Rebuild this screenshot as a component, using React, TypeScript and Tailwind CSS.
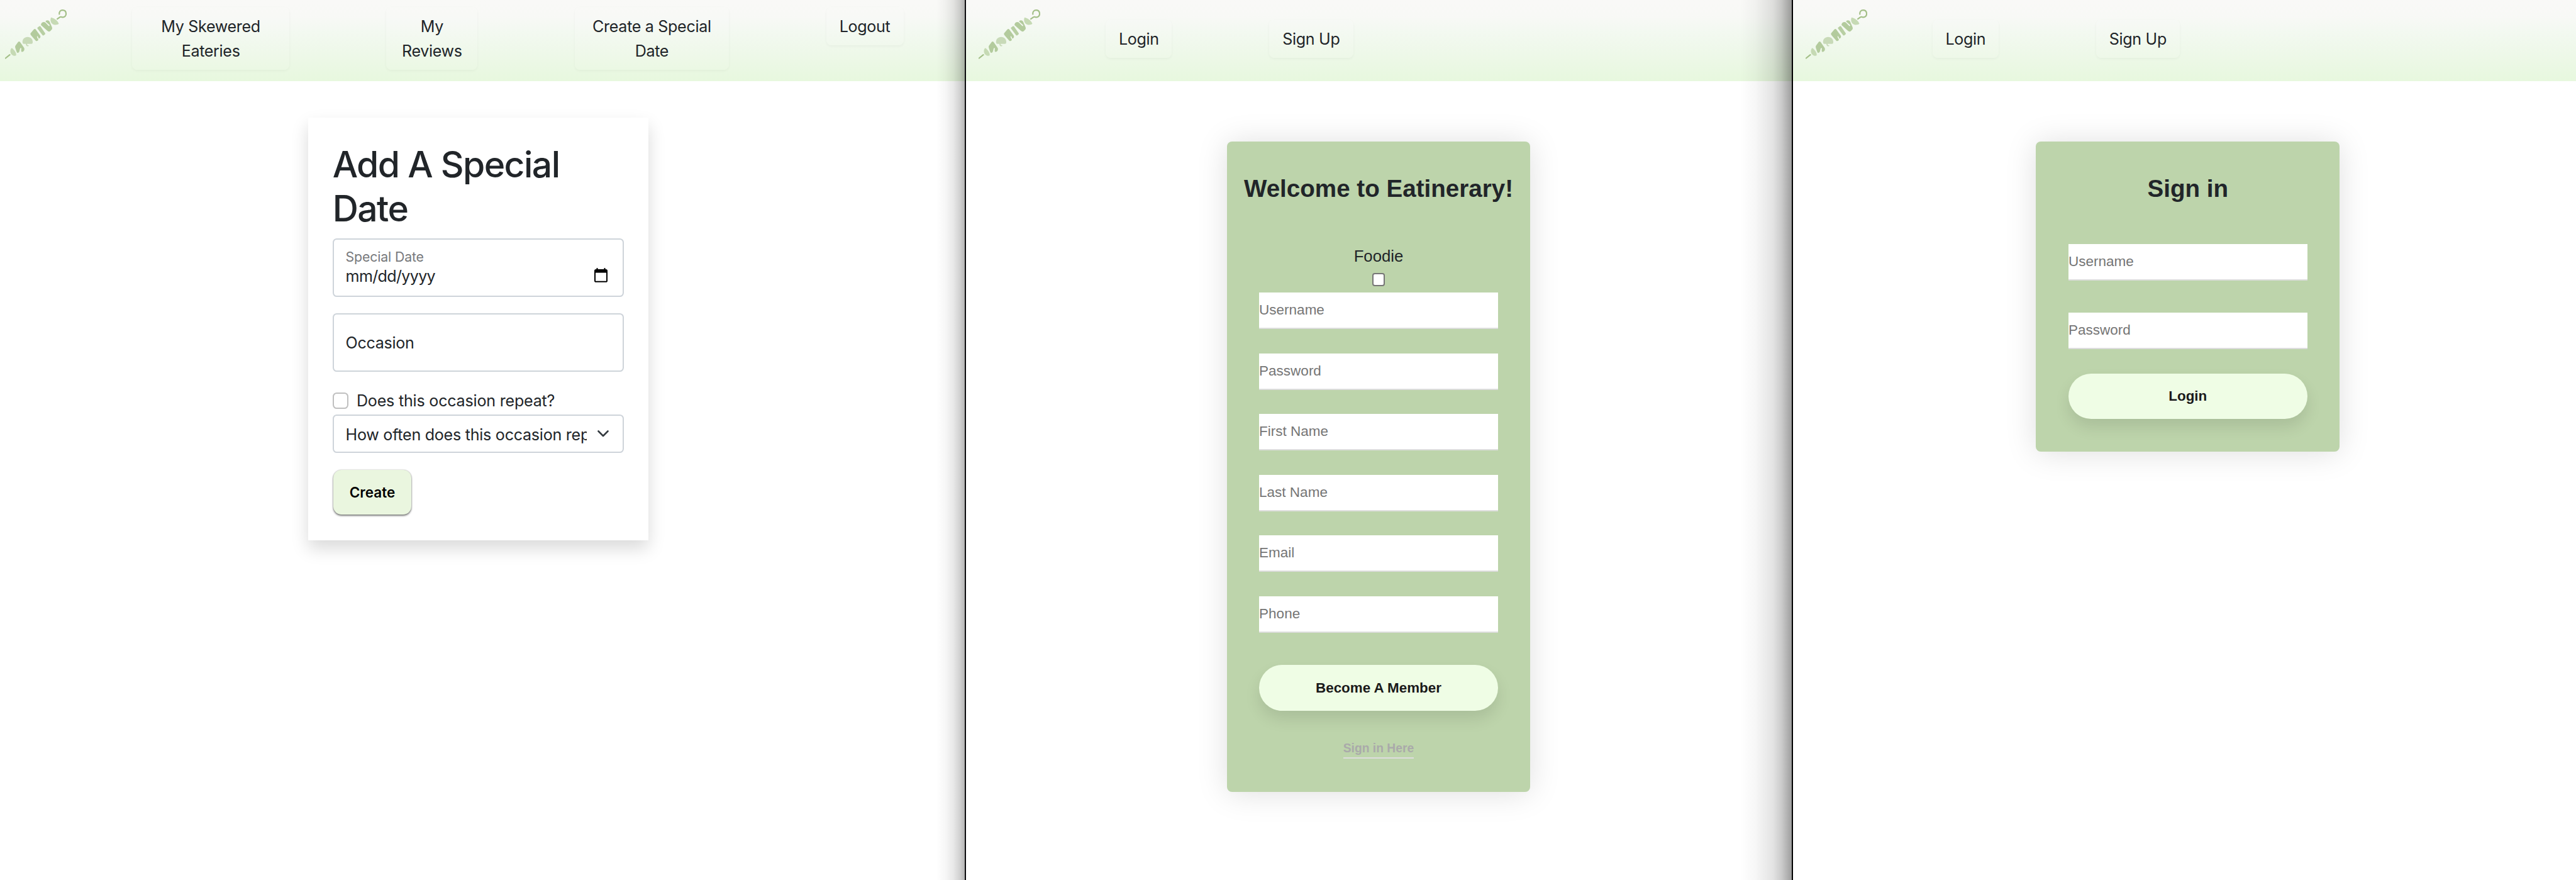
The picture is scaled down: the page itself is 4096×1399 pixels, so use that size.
import React from "react";

function SkewerLogo() {
  return (
    <svg viewBox="30 58 367 294" className="h-[78.9px] w-[98.4px] shrink-0" fill="none" aria-label="Eatinerary">
      <path d="M33 347 58 327" stroke="#a3bf87" strokeWidth="8" strokeLinecap="round" />
      <path d="M70 286C60 292 57 315 72 327C80 333 90 334 95 331C100 322 88 298 70 286Z" fill="#c6dab4" />
      <path
        d="M92 272L107 252Q113 245 119 251L143 285Q148 293 143 302Q136 312 128 309Q124 306 127 289Q122 283 119 291L114 310Q108 319 101 313Q97 305 91 286Q88 278 92 272Z"
        fill="#b3cb9d"
      />
      <path
        d="M134 256C131 234 146 221 164 221C183 221 197 236 194 256Q193 262 187 262L161 262L162 269L171 271L169 276L160 276Q154 274 153 262L141 262Q135 262 134 256Z"
        fill="#c8dab8"
      />
      <path
        d="M181 200L200 177Q208 170 214 179L239 214Q242 222 237 228L230 231Q228 222 222 215Q217 216 221 226L228 238Q222 248 213 244L183 210Q179 205 181 200Z"
        fill="#b3cb9d"
      />
      <path d="M222 166L234 157Q240 156 243 162L269 201Q270 206 258 213Q253 213 249 206L222 171Z" fill="#b8cfa3" />
      <path
        d="M243 146L247 138Q258 130 268 134L290 157Q296 157 294 150L270 130Q270 123 280 122Q291 122 294 130L309 164Q312 172 305 179L299 186Q290 193 281 185L250 157Q242 151 243 146Z"
        fill="#b3cb9d"
      />
      <path d="M303 105C296 118 299 140 318 147C330 151 343 148 349 143C345 128 325 110 303 105Z" fill="#c6dab4" />
      <path
        d="M340 114L356 103Q360 101 366 103C384 108 393 94 392 82C391 68 381 62 371 62C359 62 350 72 352 86"
        stroke="#a3bf87"
        strokeWidth="8"
        strokeLinecap="round"
        strokeLinejoin="round"
      />
    </svg>
  );
}

type NavItem = { lines: string[]; size: string };

const memberNav: NavItem[] = [
  { lines: ["My Skewered", "Eateries"], size: "w-[249.5px] h-[99.8px]" },
  { lines: ["My", "Reviews"], size: "w-[144.8px] h-[99.8px]" },
  { lines: ["Create a Special", "Date"], size: "w-[245.1px] h-[99.8px]" },
  { lines: ["Logout"], size: "w-[123.1px] h-[61.2px]" },
];

const guestNav: NavItem[] = [
  { lines: ["Login"], size: "w-[105.3px] h-[61.2px]" },
  { lines: ["Sign Up"], size: "w-[133.6px] h-[61.2px]" },
];

function NavBar({ items, className, navClassName }: { items: NavItem[]; className: string; navClassName: string }) {
  return (
    <header
      className={`flex h-[129px] gap-[103.8px] bg-[linear-gradient(180deg,#f9f9f7_0%,#f8f9f6_20%,#f3f9f1_38%,#eef8e9_65%,#e7f8de_100%)] ${className}`}
    >
      <div className="pt-[15.3px]">
        <SkewerLogo />
      </div>
      <nav className={`flex gap-[154.6px] ${navClassName}`}>
        {items.map((item) => (
          <a
            key={item.lines.join(" ")}
            className={`block rounded-[8px] bg-white/5 pt-[12.1px] text-center text-[25.1px] leading-[38.63px] tracking-[-0.013em] text-[#212529] shadow-[0_2px_4px_rgba(0,0,0,0.035),0_0_2px_rgba(0,0,0,0.015)] ${item.size}`}
          >
            {item.lines.map((line) => (
              <span key={line} className="block">
                {line}
              </span>
            ))}
          </a>
        ))}
      </nav>
    </header>
  );
}

function SpecialDateForm() {
  return (
    <form className="mt-[57.7px] ml-[490.1px] flex h-[671.9px] w-[540.8px] flex-col bg-white px-[38.6px] pt-[39.9px] text-[25.1px] tracking-[-0.012em] text-[#212529] shadow-[0_12.9px_25.7px_rgba(0,0,0,0.15)]">
      <h1 className="mb-[12px] text-[57px] leading-[70.3px] font-medium tracking-[-0.027em]">Add A Special Date</h1>

      <div className="flex h-[93.3px] shrink-0 justify-between rounded-[6.4px] border-2 border-[#ced4da] pt-[12.1px] pr-[24.5px] pl-[18.9px]">
        <div>
          <div className="text-[21.3px] leading-[30px] tracking-[-0.007em] text-[#77797c]">Special Date</div>
          <div className="mt-[0.8px] leading-[30px] tracking-[-0.027em]">mm/dd/yyyy</div>
        </div>
        <svg viewBox="0 0 21 23" className="mt-[33px] h-[23px] w-[21px]" fill="none">
          <path d="M4.5 0v4M16.5 0v4" stroke="#000" strokeWidth="2" />
          <rect x="1" y="3" width="19" height="18.8" rx="1.6" stroke="#000" strokeWidth="2" />
          <path d="M1 3h19v4.6H1z" fill="#000" />
        </svg>
      </div>

      <div className="mt-[25.6px] flex h-[93.3px] shrink-0 items-center rounded-[6.4px] border-2 border-[#ced4da] pt-[2px] pl-[18.9px]">
        Occasion
      </div>

      <label className="mt-[26.4px] flex h-[38.6px] shrink-0 items-center gap-[12.5px] leading-[38.6px] tracking-[-0.0086em]">
        <input type="checkbox" className="size-[25.75px] appearance-none rounded-[6.4px] border-2 border-[#bfbfbf] bg-white" />
        Does this occasion repeat?
      </label>

      <div className="mt-[2.7px] flex h-[61px] shrink-0 items-center justify-between rounded-[6.4px] border-2 border-[#ced4da] pr-[22.5px] pl-[18.9px]">
        <span className="w-[383.5px] overflow-hidden pt-[2px] leading-[38px] tracking-[-0.0105em] whitespace-nowrap">
          How often does this occasion repeat?
        </span>
        <svg viewBox="0 0 18 11" className="h-[11px] w-[18px]" fill="none">
          <path d="M1.5 1.5 9 9l7.5-7.5" stroke="#343a40" strokeWidth="2.6" strokeLinecap="round" strokeLinejoin="round" />
        </svg>
      </div>

      <button
        type="button"
        className="mt-[26.8px] ml-[1px] h-[71.6px] w-[124.6px] shrink-0 rounded-[13px] bg-[#eaf6df] text-[22.5px] font-semibold tracking-normal text-black shadow-[0_2px_3px_rgba(0,0,0,0.5),0_0_2px_rgba(0,0,0,0.3)]"
      >
        Create
      </button>
    </form>
  );
}

function GreenCard({ title, className, children }: { title: string; className: string; children: React.ReactNode }) {
  return (
    <form
      className={`mt-[96.3px] flex w-[482.8px] flex-col items-center rounded-[8px] bg-[#bdd4ab] pt-[51.3px] font-['Liberation_Sans',Arial,sans-serif] text-[#212529] shadow-[0_2px_50px_rgba(0,0,0,0.13)] ${className}`}
    >
      <h2 className="text-[38.6px] leading-[46px] font-bold whitespace-nowrap">{title}</h2>
      {children}
    </form>
  );
}

function Field({ placeholder }: { placeholder: string }) {
  return (
    <input
      placeholder={placeholder}
      className="block h-[57.9px] w-[379.8px] shrink-0 border-b-2 border-[#ddd] bg-white text-[22.5px] placeholder:text-[#757575]"
    />
  );
}

function PillButton({ label, className }: { label: string; className: string }) {
  return (
    <button
      type="button"
      className={`h-[72.4px] w-[379.8px] shrink-0 rounded-full bg-[#effde5] text-[22.4px] font-bold text-[#1a1a1a] shadow-[0_12.9px_24px_rgba(0,0,0,0.1)] ${className}`}
    >
      {label}
    </button>
  );
}

const signUpFields = ["Username", "Password", "First Name", "Last Name", "Email", "Phone"];
const signInFields = ["Username", "Password"];

export default function App() {
  return (
    <div className="flex h-[1399px] w-[4096px] overflow-hidden bg-white font-['Inter',sans-serif]">
      <section className="relative w-[1534px] shrink-0 overflow-hidden">
        <NavBar items={memberNav} className="pl-[8.2px]" navClassName="pt-[11.25px]" />
        <SpecialDateForm />
        <div className="absolute inset-y-0 right-0 w-[45px] bg-[linear-gradient(90deg,rgba(0,0,0,0)_0%,rgba(0,0,0,0.03)_30%,rgba(0,0,0,0.09)_60%,rgba(0,0,0,0.18)_83%,rgba(0,0,0,0.29)_100%)]" />
      </section>

      <section className="relative w-[1315px] shrink-0 overflow-hidden border-l-2 border-[#0c0c0e]">
        <NavBar items={guestNav} className="pl-[20px]" navClassName="pt-[30.6px]" />
        <GreenCard title="Welcome to Eatinerary!" className="ml-[414.6px] h-[1033.3px]">
          <label htmlFor="foodie" className="mt-[65.1px] text-[25.75px] leading-[38.6px]">
            Foodie
          </label>
          <input
            id="foodie"
            type="checkbox"
            className="mt-[7.4px] size-[20.9px] shrink-0 appearance-none rounded-[4px] border-2 border-[#767676] bg-white"
          />
          <div className="mt-[10.5px] flex flex-col gap-[38.67px]">
            {signUpFields.map((name) => (
              <Field key={name} placeholder={name} />
            ))}
          </div>
          <PillButton label="Become A Member" className="mt-[51.5px]" />
          <a className="mt-[45.6px] border-b-2 border-[#ddd] text-[19.3px] leading-[29.3px] font-bold text-[#aaa]">Sign in Here</a>
        </GreenCard>
        <div className="absolute inset-y-0 right-0 w-[83px] bg-[linear-gradient(90deg,rgba(0,0,0,0)_0%,rgba(0,0,0,0.03)_30%,rgba(0,0,0,0.11)_64%,rgba(0,0,0,0.2)_80%,rgba(0,0,0,0.38)_100%)]" />
      </section>

      <section className="min-w-0 flex-1 overflow-hidden border-l-2 border-black">
        <NavBar items={guestNav} className="pl-[19.5px]" navClassName="pt-[30.6px]" />
        <GreenCard title="Sign in" className="ml-[386.4px] h-[492.5px]">
          <div className="mt-[65.3px] flex flex-col gap-[51.5px]">
            {signInFields.map((name) => (
              <Field key={name} placeholder={name} />
            ))}
          </div>
          <PillButton label="Login" className="mt-[38.7px]" />
        </GreenCard>
      </section>
    </div>
  );
}
